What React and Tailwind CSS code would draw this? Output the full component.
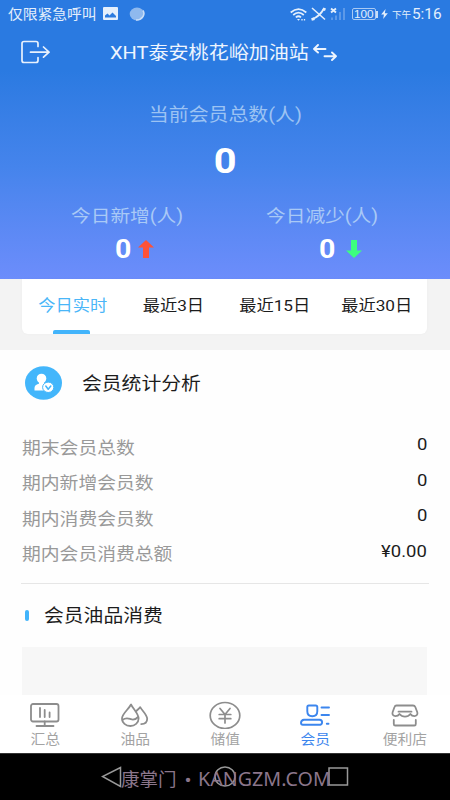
const tabs = [
  { label: '今日实时', active: true, box: 'w-[101px]' },
  { label: '最近3日', box: 'w-[101px]' },
  { label: '最近15日', box: 'w-[102px]' },
  { label: '最近30日', box: 'w-[101px]' },
]

const stats = [
  { label: '期末会员总数', value: '0' },
  { label: '期内新增会员数', value: '0' },
  { label: '期内消费会员数', value: '0' },
  { label: '期内会员消费总额', value: '¥0.00' },
]

const navItems = [
  { label: '汇总', icon: SummaryIcon },
  { label: '油品', icon: OilIcon },
  { label: '储值', icon: YuanIcon },
  { label: '会员', icon: MemberIcon, active: true },
  { label: '便利店', icon: StoreIcon },
]

function SummaryIcon() {
  return (
    <svg className="w-8 h-7" viewBox="0 0 32 28" fill="none" stroke="currentColor" strokeWidth="1.8" strokeLinecap="round">
      <rect x="2" y="3" width="27.5" height="17.500" rx="2" />
      <path d="M11 7v9M15.700 9v7M20.600 11.500V16M15.700 20.500v4M7.500 25h17" />
    </svg>
  )
}

function OilIcon() {
  return (
    <svg className="w-8 h-7" viewBox="0 0 32 28" fill="none" stroke="currentColor" strokeWidth="1.8" strokeLinejoin="round" strokeLinecap="round">
      <path d="M12 3.500C9.500 8.500 3 12.800 3 17.500C3 22 6.800 25 11.300 25S19.600 22 19.600 17.500C19.600 12.800 14.300 8 12 3.500Z" />
      <path d="M3.300 19c4-3 6.500-1.500 8.500-.8s4.500.7 7.300-2.200" />
      <path d="M17 10.300c1.300-1.300 3.100-2.800 4.200-4.200c2.300 4 7 7.700 7 11.700c0 3.200-2.300 5.300-6 5.300" />
    </svg>
  )
}

function YuanIcon() {
  return (
    <svg className="w-8 h-7" viewBox="0 0 32 28" fill="none" stroke="currentColor" strokeWidth="1.7" strokeLinecap="round">
      <ellipse cx="16" cy="14.500" rx="14.800" ry="13" />
      <path d="M11 7.500l5 6L21 7.500M16 13.500V22M10.200 13.500h11.600M10.200 17.700h11.600" />
    </svg>
  )
}

function MemberIcon() {
  return (
    <svg className="w-8 h-7" viewBox="0 0 32 28" fill="none" stroke="currentColor" strokeWidth="1.900" strokeLinecap="round" strokeLinejoin="round">
      <path d="M9.800 4.500h6.900q1.600 0 1.600 1.600v4.200c0 3-2.100 4.900-5 4.900s-5-1.900-5-4.900V6.100q0-1.600 1.500-1.600Z" />
      <path d="M5 18.700h15.500q2.600.3 2.600 2.500t-1.800 2.500H3.800Q2 23.700 2 21.800q.2-2.900 3-3.100Z" />
      <path d="M22.500 6.500h7.500M22.500 14h7.500M27.800 22.700h1.700" />
    </svg>
  )
}

function StoreIcon() {
  return (
    <svg className="w-8 h-7" viewBox="0 0 32 28" fill="none" stroke="currentColor" strokeWidth="1.800" strokeLinecap="round" strokeLinejoin="round">
      <path d="M7.500 4.500h16.500q1.700 0 2.300 1.500l2 5.200c.6 2.300-.8 4-2.900 4q-2.600 0-4-2.200q-2 2.700-5.400 2.700t-5.500-2.700q-1.400 2.200-4 2.200c-2.200 0-3.600-1.700-2.900-4l1.900-5.200Q6 4.500 7.500 4.500Z" />
      <path d="M9.500 10.700h13M4.800 19v3.900q0 1.600 1.500 1.600h19q1.500 0 1.500-1.600V19" />
    </svg>
  )
}

function StatusBar() {
  return (
    <div className="h-7 flex items-center justify-between pl-2 pr-[9px] text-[#e4effc]">
      <div className="flex items-center">
        <span className="w-[95px] pt-px text-[13.200px] whitespace-nowrap scale-x-112 origin-left">仅限紧急呼叫</span>
        <svg className="w-[15px] h-[13px]" viewBox="0 0 15 13">
          <rect width="15" height="13" rx="1" fill="currentColor" />
          <path d="M2 10.500V8.500l2.500-2 2 2 3-3 3.500 3.500v1.500Z" fill="#2b7bdf" />
        </svg>
        <svg className="w-4 h-[14px] ml-[11px]" viewBox="0 0 16 14">
          <ellipse cx="8" cy="7" rx="7.300" ry="6.500" fill="#8fb9ee" />
          <path d="M14 3.500A7.500 6.500 0 0 1 7 13" fill="none" stroke="#c9def8" strokeWidth="1.500" />
        </svg>
      </div>
      <div className="flex items-center">
        <svg className="w-[17px] h-[13px]" viewBox="0 0 17 13" fill="none" stroke="currentColor" strokeWidth="1.700">
          <path d="M.7 4.500Q8.500-2.300 16.300 4.500M3.200 7Q8.500 2.300 13.800 7M5.800 9.300Q8.500 7.200 11 9.300" />
          <path d="M7 11l1.500 1.700L10 11Z" fill="currentColor" stroke="none" />
          <path d="M12 11v1.500M14.500 11v1.500" strokeWidth="1.300" />
        </svg>
        <svg className="w-[15px] h-[14px] ml-[4px]" viewBox="0 0 15 14" fill="none" stroke="currentColor">
          <path d="M1 1l13 11.500" strokeWidth="1.500" />
          <path d="M1.500 12C7 10 10 7 13 1.500" strokeWidth="1.800" />
          <path d="M.5 12.500l3-.8M12.700 3.500l1-2.500" strokeWidth="2.800" />
        </svg>
        <svg className="w-[15px] h-[14px] ml-[4px]" viewBox="0 0 15 14">
          <path d="M1 1.500l5 4M6 1.500l-5 4" stroke="currentColor" strokeWidth="1.900" />
          <path d="M1 10.500h2V13H1ZM5 8.500h2V13H5ZM9 5h2v8H9ZM13 1h2v12h-2Z" fill="#5c99e8" />
        </svg>
        <div className="ml-[7px] w-[24px] h-[12px] rounded-[2px] border border-[#a9caf4] flex items-center justify-center">
          <span className="font-['Liberation_Sans'] text-[10.500px] leading-[10px] scale-x-112">100</span>
        </div>
        <div className="w-[2px] h-[7px] bg-[#c9def8]" />
        <svg className="w-[7px] h-[10px] ml-[3px]" viewBox="0 0 6 9" fill="currentColor">
          <path d="M4 0L0 5h2.500L1.800 9L6 3.800H3.300Z" />
        </svg>
        <span className="ml-[4px] text-[9.500px] leading-5 mt-[2px] w-5 whitespace-nowrap">下午</span>
        <span className="w-[29px] text-[14.200px] leading-5 whitespace-nowrap scale-x-108 origin-left">5:16</span>
      </div>
    </div>
  )
}

function TodayCount({ label, arrow, box, gap }) {
  return (
    <div className={`${box} flex flex-col items-center`}>
      <p className="text-[17.600px] leading-6 text-[#a9c9f6] whitespace-nowrap scale-x-112">{label}</p>
      <div className={`h-[30px] mt-[6px] flex items-center ${gap}`}>
        <span className="text-[25.500px] leading-[30px] font-bold scale-x-112">0</span>
        {arrow === 'up' ? (
          <svg className="w-4 h-[18px]" viewBox="0 0 16 18" fill="#fd5237">
            <path d="M8 0l8 7.500h-5V18H5V7.500H0Z" />
          </svg>
        ) : (
          <svg className="w-4 h-[18px]" viewBox="0 0 16 18" fill="#3dff7e">
            <path d="M8 18l8-7.500h-5V0H5v10.500H0Z" />
          </svg>
        )}
      </div>
    </div>
  )
}

function Header() {
  return (
    <header className="h-[279px] bg-linear-to-b from-[#2a7ae1] from-25% via-[#4584ec] via-60% to-[#6c8dfb] text-white">
      <StatusBar />
      <div className="h-12 flex items-center pl-[21px]">
        <svg className="w-[29px] h-6" viewBox="0 0 29 24" fill="none" stroke="#e8f1fd" strokeWidth="1.700" strokeLinecap="round" strokeLinejoin="round">
          <path d="M17 6.500V3.500Q17 1.500 15 1.500H3Q1 1.500 1 3.500v17Q1 22.500 3 22.500h12Q17 22.500 17 20.500v-3M9.500 12.200H28M22.500 7l5.500 5.200-5.500 5" />
        </svg>
        <h1 className="w-[202px] ml-[60px] pt-[2px] text-[17.900px] whitespace-nowrap scale-x-112 origin-left text-[#eef5fe]">XHT泰安桃花峪加油站</h1>
        <svg className="w-6 h-[17px] ml-px" viewBox="0 0 24 17" fill="none" stroke="#eef5fe" strokeWidth="1.900" strokeLinecap="round" strokeLinejoin="round">
          <path d="M5 1L1 5l4 3.500M1 5h11.500M19 8.500l4 3.700-4 3.800M23 12.200H11.500" />
        </svg>
      </div>
      <div className="flex flex-col items-center pt-[27px]">
        <p className="text-[17.800px] leading-6 text-[#9cc3f3] scale-x-112">当前会员总数(人)</p>
        <p className="text-[35.500px] leading-10 font-bold mt-[14px] scale-x-112">0</p>
      </div>
      <div className="flex justify-center mt-[23px]">
        <TodayCount label="今日新增(人)" arrow="up" box="w-[195px]" gap="pl-[15px] gap-[8px]" />
        <TodayCount label="今日减少(人)" arrow="down" box="w-[195px]" gap="pl-[37px] gap-[12px]" />
      </div>
    </header>
  )
}

function RangeTabs() {
  return (
    <div className="h-[71px] bg-[#f3f3f3] px-[22px]">
      <div className="h-[55px] w-[405px] bg-white rounded-b-md flex shadow-[0_0_3px_rgba(0,0,0,0.03)]">
        {tabs.map(t => (
          <div key={t.label} className={`${t.box} h-full flex flex-col items-center ${t.active ? 'text-[#4ab6f8]' : 'text-[#1c1c1c]'}`}>
            <span className="h-[51px] pt-[4px] flex items-center text-[15.400px] whitespace-nowrap scale-x-112">{t.label}</span>
            {t.active && <div className="w-[37px] h-1 rounded-t-xs bg-[#42b4fb] -ml-[3px]" />}
          </div>
        ))}
      </div>
    </div>
  )
}

function MemberStats() {
  return (
    <section className="h-[345px] bg-[#fefefe] px-[22px] overflow-hidden">
      <div className="h-[66px] flex items-center pl-[3px]">
        <svg className="w-[37px] h-[34px]" viewBox="0 0 37 34">
          <ellipse cx="18.500" cy="17" rx="18.500" ry="16.700" fill="#43b6fb" />
          <ellipse cx="16.500" cy="12.500" rx="4.800" ry="4.800" fill="#fff" />
          <path d="M14 15h5v3.500h-5ZM9.500 24.500v-2.500q0-3 3.500-4l3-1h3l2 2-1 5.500Z" fill="#fff" />
          <ellipse cx="23.200" cy="21.300" rx="5.600" ry="5.200" fill="#fff" stroke="#43b6fb" strokeWidth="1" />
          <path d="M20.800 20l2.400 3.300L25.800 20" fill="none" stroke="#43b6fb" strokeWidth="1.500" strokeLinecap="round" strokeLinejoin="round" />
        </svg>
        <h2 className="ml-[20px] pt-[2px] text-[17.700px] text-[#1c1c1c] scale-x-112 origin-left">会员统计分析</h2>
      </div>
      <div className="pt-[14px]">
        {stats.map(s => (
          <div key={s.label} className="h-[35.500px] flex items-center justify-between">
            <span className="pt-px text-[16.800px] text-[#999] scale-x-112 origin-left">{s.label}</span>
            <span className="text-[16.500px] text-[#1c1c1c] scale-x-112 origin-right mb-[4px] mr-px">{s.value}</span>
          </div>
        ))}
      </div>
      <div className="h-px bg-[#e6e6e6] mt-[11px] -mx-px" />
      <div className="h-[63px] flex items-center pl-[3px]">
        <div className="w-1 h-[11px] rounded-xs bg-[#42b4fb]" />
        <h2 className="ml-[15px] pt-[2px] text-[17.700px] text-[#1c1c1c] scale-x-112 origin-left">会员油品消费</h2>
      </div>
      <div className="h-[48px] w-[405px] bg-[#f7f7f7]" />
    </section>
  )
}

function BottomNav() {
  return (
    <nav className="h-[58px] bg-white grid grid-cols-5">
      {navItems.map(({ label, icon: Icon, active }) => (
        <div key={label} className={`flex flex-col items-center pt-[6px] ${active ? 'text-[#3c86ee]' : 'text-[#8d8d8d]'}`}>
          <Icon />
          <span className={`mt-px text-[13.200px] leading-5 scale-x-112 whitespace-nowrap ${active ? '' : 'text-[#a3a3a3]'}`}>{label}</span>
        </div>
      ))}
    </nav>
  )
}

function SystemBar() {
  return (
    <footer className="relative h-[47px] bg-black border-t border-[#333] flex items-center justify-center">
      <svg className="w-[248px] h-[22px]" viewBox="0 0 248 22" fill="none" stroke="#999" strokeWidth="1.500">
        <path d="M19.500 1.500v19L1.500 10.500Z" />
        <ellipse cx="124" cy="10.500" rx="10" ry="9.500" />
        <rect x="228" y="2" width="18.500" height="17" />
      </svg>
      <p className="absolute left-[121px] top-[12px] flex items-center leading-6 whitespace-nowrap text-[#8b768b]">
        <span className="w-[57px] pt-[2px] text-[18.500px]">康掌门</span>
        <span className="w-[20px] pt-px text-center text-[21px]">•</span>
        <span className="font-['Noto_Sans'] text-[19.700px]">KANGZM.COM</span>
      </p>
    </footer>
  )
}

export default function App() {
  return (
    <div className="w-[450px] h-[800px] overflow-hidden bg-white font-['Roboto','Noto_Sans_CJK_SC',sans-serif]">
      <Header />
      <RangeTabs />
      <MemberStats />
      <BottomNav />
      <SystemBar />
    </div>
  )
}
